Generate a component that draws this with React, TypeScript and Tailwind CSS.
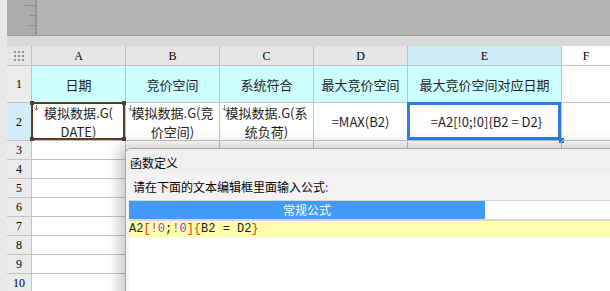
import React from "react";

const cellFont = "font-['Noto_Sans_CJK_SC','Noto_Sans',sans-serif]";
const hdrFont = "font-['Liberation_Serif','Noto_Sans_CJK_SC',serif]";

function DropMark() {
  return (
    <svg className="absolute left-[2px] top-[2px]" width="5" height="6" viewBox="0 0 5 6">
      <path d="M2.5 0 V5" stroke="#8a8a8a" strokeWidth="1" />
      <path d="M0.5 3 L2.5 5.5 L4.5 3" stroke="#8a8a8a" strokeWidth="1" fill="none" />
    </svg>
  );
}

function ColHead({ label, active = false, last = false }: { label: string; active?: boolean; last?: boolean }) {
  return (
    <div
      className={`flex items-center justify-center border-b border-[#c2c2c2] text-[12px] text-black ${hdrFont} ${
        last ? "bg-white" : "border-r"
      } ${active ? "bg-[#cdeef8]" : last ? "" : "bg-[#e6e6e6]"}`}
    >
      {label}
    </div>
  );
}

function RowHead({ n, active = false }: { n: number; active?: boolean }) {
  return (
    <div
      className={`flex items-center justify-center border-r border-b border-[#c2c2c2] text-[12px] text-black ${hdrFont} ${
        active ? "bg-[#d3edf8]" : "bg-[#ebebeb]"
      }`}
    >
      {n}
    </div>
  );
}

function Cell({ children, className = "" }: { children?: React.ReactNode; className?: string }) {
  return (
    <div className={`relative flex items-center justify-center border-r border-b border-[#c2c2c2] text-center text-[13px] leading-[19px] text-[#1e1e1e] ${cellFont} ${className}`}>
      {children}
    </div>
  );
}

export default function App() {
  const cols = ["A", "B", "C", "D", "E"];
  const rowsBelow = [3, 4, 5, 6, 7, 8, 9, 10];

  return (
    <div className="relative flex h-[291px] w-[610px] overflow-hidden bg-white">
      {/* left strip */}
      <div className="w-[7px] shrink-0 bg-[#e8e8e8]" />

      <div className="flex flex-1 flex-col">
        {/* top toolbar area */}
        <div className="flex h-[36px] shrink-0 border-b border-[#9c9c9c] bg-[#b4b4b4]">
          <div className="flex w-[30px] flex-col items-end gap-[9px] border-r-2 border-[#939393] bg-[#acacac] pt-[5px]">
            <div className="h-px w-[11px] bg-[#8c8c8c]" />
            <div className="h-px w-[5px] bg-[#8c8c8c]" />
            <div className="h-px w-[6px] bg-[#8c8c8c]" />
          </div>
        </div>
        <div className="h-[10px] shrink-0 bg-[#d9d9d9]" />

        {/* sheet */}
        <div className="grid grid-cols-[25px_94px_94px_94px_94px_154px_1fr] grid-rows-[20px_37px_38px_repeat(8,19px)]">
          <div className="flex items-center justify-center border-r border-b border-[#c2c2c2] bg-[#e6e6e6]">
            <div className="grid grid-cols-3 gap-[2px]">
              {Array.from({ length: 9 }).map((_, i) => (
                <div key={i} className="h-[2px] w-[2px] bg-[#8f8f8f]" />
              ))}
            </div>
          </div>
          {cols.map((c) => (
            <ColHead key={c} label={c} active={c === "E"} />
          ))}
          <ColHead label="F" last />

          {/* row 1 */}
          <RowHead n={1} />
          <Cell className="bg-[#ccffff]">日期</Cell>
          <Cell className="bg-[#ccffff]">竞价空间</Cell>
          <Cell className="bg-[#ccffff]">系统符合</Cell>
          <Cell className="bg-[#ccffff]">最大竞价空间</Cell>
          <Cell className="bg-[#ccffff]">最大竞价空间对应日期</Cell>
          <Cell className="border-r-0" />

          {/* row 2 */}
          <RowHead n={2} active />
          <Cell>
            <DropMark />
            <span>
              模拟数据.G(
              <br />
              DATE)
            </span>
            <div className="absolute -left-px -top-px bottom-0 right-0 border-2 border-[#5e3c1c]" />
            <div className="absolute -left-[2px] -top-[2px] h-[4px] w-[4px] bg-[#5e3c1c]" />
            <div className="absolute -right-[1px] -top-[2px] h-[4px] w-[4px] bg-[#5e3c1c]" />
            <div className="absolute -left-[2px] -bottom-[1px] h-[4px] w-[4px] bg-[#5e3c1c]" />
            <div className="absolute -right-[1px] -bottom-[1px] h-[4px] w-[4px] bg-[#5e3c1c]" />
          </Cell>
          <Cell>
            <DropMark />
            <span>
              模拟数据.G(竞
              <br />
              价空间)
            </span>
          </Cell>
          <Cell>
            <DropMark />
            <span className="whitespace-nowrap">
              模拟数据.G(系
              <br />
              统负荷)
            </span>
          </Cell>
          <Cell>=MAX(B2)</Cell>
          <Cell>
            <span className="pl-[4px]">=A2[!0;!0]{"{"}B2 = D2{"}"}</span>
            <div className="absolute -left-px -top-px bottom-0 right-0 border-[3px] border-[#2f7ee2]" />
            <div className="absolute -right-[3px] -bottom-[3px] h-[5px] w-[5px] bg-[#2f7ee2]" />
          </Cell>
          <Cell className="border-r-0" />

          {rowsBelow.map((r) => (
            <React.Fragment key={r}>
              <RowHead n={r} />
              <Cell />
              <Cell />
              <Cell />
              <Cell />
              <Cell />
              <Cell className="border-r-0" />
            </React.Fragment>
          ))}
        </div>
      </div>

      {/* dialog overlay */}
      <div className="absolute left-[125px] top-[148px] flex h-[170px] w-[520px] flex-col overflow-hidden rounded-tl-[6px] border-l border-t border-[#a6a6a6] bg-white shadow-[-6px_-3px_14px_rgba(0,0,0,0.22)]">
        <div className={`flex h-[25px] shrink-0 items-center bg-[#f0f0f0] pl-[4px] pt-[2px] text-[12px] text-black ${cellFont}`}>
          函数定义
        </div>
        <div className="flex flex-1 flex-col bg-[#f3f3f5] pl-[3px]">
          <div className={`flex h-[26px] shrink-0 items-center pl-[4px] text-[12px] text-black ${cellFont}`}>
            请在下面的文本编辑框里面输入公式<span className="text-[#6a2a8a]">:</span>
          </div>
          <div className="flex flex-1 flex-col border-t border-[#d6d6d6] bg-white">
            <div className="flex h-[20px] shrink-0 border-b-2 border-[#d8d8d8]">
              <div className={`flex w-[356px] items-center justify-center bg-[#429bf9] text-[12px] text-white ${cellFont}`}>
                常规公式
              </div>
            </div>
            <div className="flex h-[16px] shrink-0 items-center bg-[#ffffaa] font-['Liberation_Mono',monospace] text-[12px] leading-none text-[#1a1a1a] whitespace-pre">
              <span className="text-[#2a2a10]">A2</span>
              <span className="text-[#e8322a]">[</span>
              <span className="text-[#9a32d0]">!0</span>
              <span>;</span>
              <span className="text-[#9a32d0]">!0</span>
              <span className="text-[#e8322a]">]</span>
              <span className="text-[#e8322a]">{"{"}</span>
              <span>B2 = D2</span>
              <span className="text-[#e8322a]">{"}"}</span>
            </div>
            <div className="flex-1 bg-white" />
          </div>
        </div>
      </div>
    </div>
  );
}
